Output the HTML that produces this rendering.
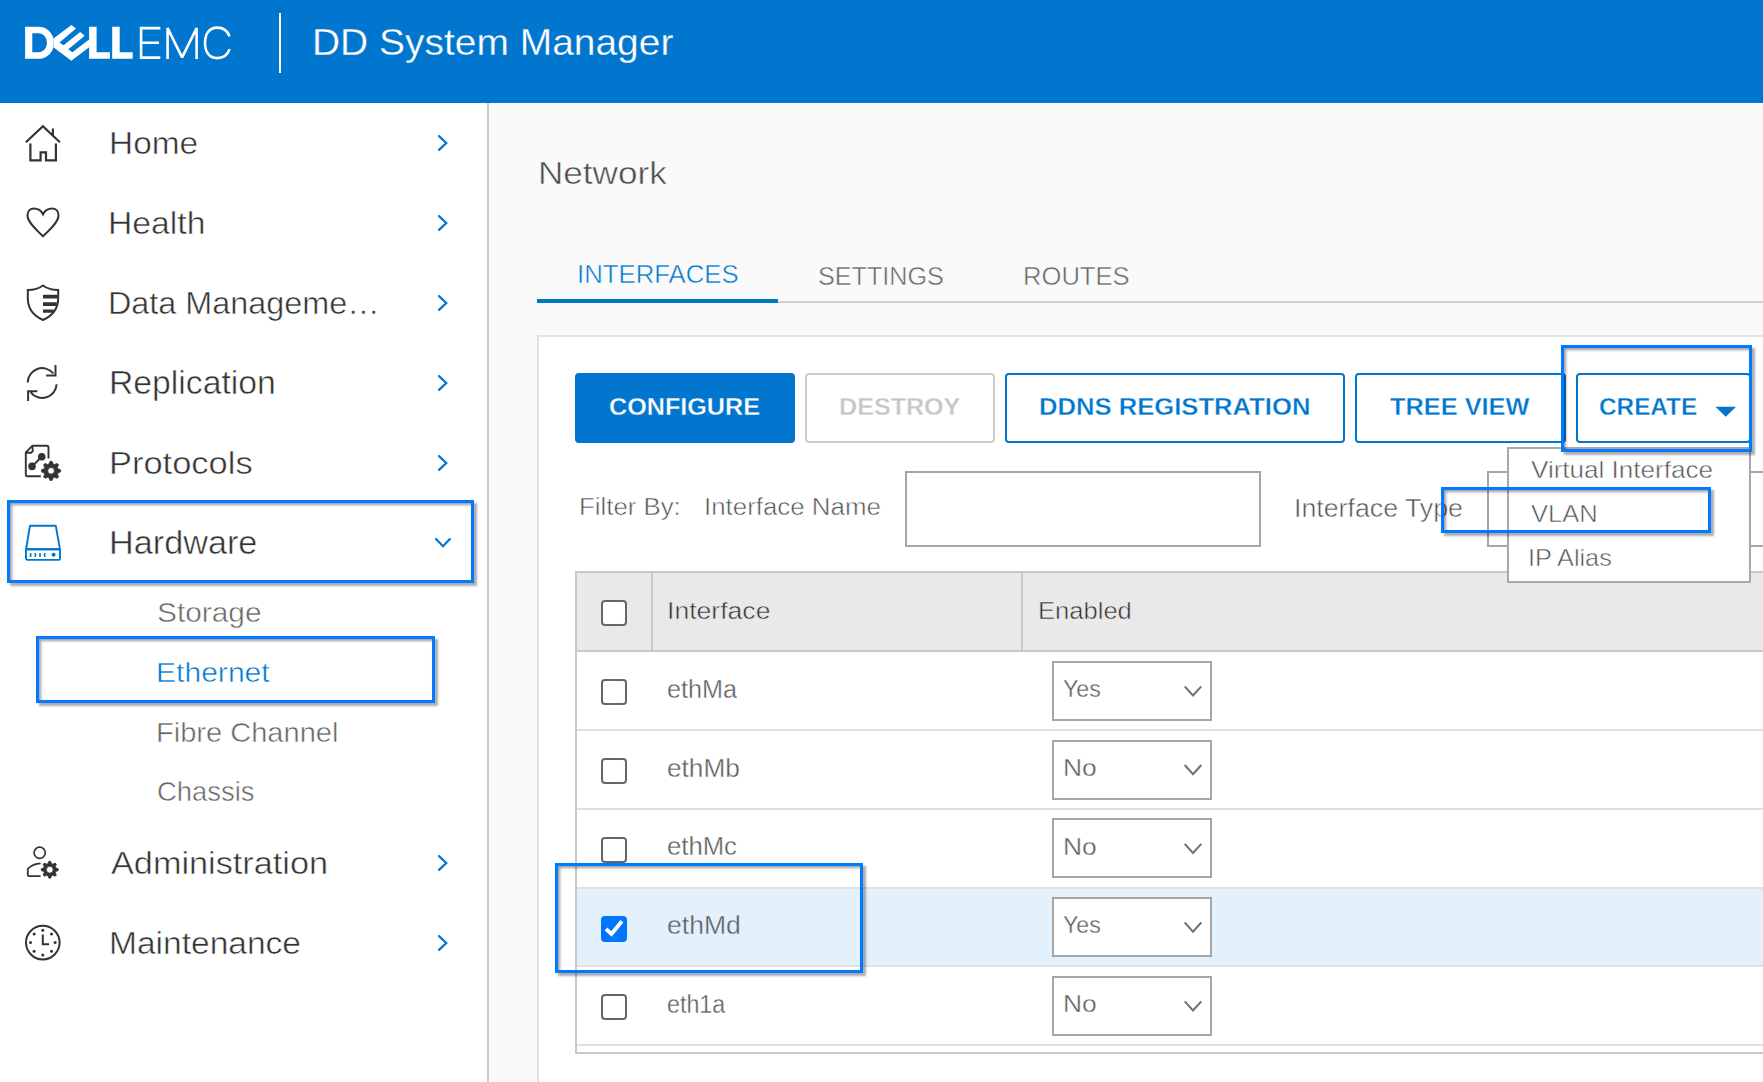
<!DOCTYPE html>
<html><head><meta charset="utf-8"><style>
html,body{margin:0;padding:0;width:1763px;height:1082px;overflow:hidden;background:#fafafa;font-family:"Liberation Sans",sans-serif;}
.abs{position:absolute;box-sizing:border-box;}
.t{position:absolute;white-space:nowrap;transform-origin:0 0;z-index:6;}
#header{left:0;top:0;width:1763px;height:103px;background:#0076ce;}
#sidebar{left:0;top:103px;width:487px;height:979px;background:#fff;border-right:2px solid #cbcbcb;box-sizing:content-box;}
#card{left:537px;top:335px;width:1300px;height:900px;background:#fff;border:2px solid #e3e3e3;}
.btn{position:absolute;box-sizing:border-box;top:373px;height:70px;border-radius:4px;border:2px solid #0076ce;background:#fff;}
.hl{position:absolute;box-sizing:border-box;border:3px solid #007bff;z-index:20;box-shadow:3px 3px 2px rgba(0,0,0,.32), inset 2px 2px 3px rgba(0,0,0,.38);}
.cb{position:absolute;box-sizing:border-box;left:601px;width:26px;height:26px;border:2px solid #666;border-radius:4px;background:#fff;}
.sel{position:absolute;box-sizing:border-box;left:1052px;width:160px;height:60px;border:2px solid #a6a6a6;background:#fff;}
.rowline{position:absolute;left:577px;width:1200px;height:2px;background:#e0e0e0;}
svg{position:absolute;overflow:visible;}

</style></head><body>
<div class="abs" id="header"></div>
<svg style="left:0;top:0;z-index:2" width="300" height="103" viewBox="0 0 300 103">
  <g fill="#fff">
    <path d="M25.1,26.8 H38.4 C46,26.8 51.5,31.5 53.4,38.4 V47.2 C51.5,54 46,58.8 38.4,58.8 H25.1 Z M32.3,33.3 V52.3 H38.4 C43.5,52.3 46.9,48 46.9,42.8 C46.9,37.6 43.5,33.3 38.4,33.3 Z" fill-rule="evenodd"/>
    <path d="M71.4,24.9 L76,28.5 L59.5,42.5 L63.6,45.2 L80.2,32.1 L84.7,35.8 L68.3,49.3 L72.4,52.3 L89.1,39.4 L89.1,47.2 L71.4,60.8 L53.4,47.2 L53.4,38.4 Z"/>
    <path d="M89.1,26.8 H96.6 V52.3 H109.9 V58.8 H89.1 Z"/>
    <path d="M112.2,26.8 H119.7 V52.3 H132.7 V58.8 H112.2 Z"/>
  </g>
  <g fill="none" stroke="#fff" stroke-width="2.6">
    <path d="M160.3,28.1 H141.1 V57.6 H160.3 M141.1,42.7 H159"/>
    <path d="M167.6,58.9 V28.1 L182.1,57.3 L196.6,28.1 V58.9" stroke-linejoin="miter" stroke-miterlimit="2"/>
    <path d="M229.6,36.4 C227.5,30.5 222.5,27.6 217,27.6 C209,27.6 205,34.5 205,43 C205,51.5 209,58.1 217,58.1 C222.5,58.1 227.5,55.5 229.6,49.2"/>
  </g>
  <rect x="279" y="13" width="2" height="60" fill="#fff"/>
</svg>
<div class="abs" id="sidebar"></div>
<!-- sidebar icons -->
<svg style="left:0;top:0;z-index:3" width="487" height="1082" viewBox="0 0 487 1082">
  <g fill="none" stroke="#333" stroke-width="2.2">
    <!-- home -->
    <path d="M25.9,142.2 L42.9,126.3 L59.9,142.2 M52.9,128.5 V136.5 M30.4,143.4 V160.4 H40.6 V152.4 H46 V160.4 H55.9 V143.4"/>
    <!-- heart -->
    <path stroke-width="2" d="M43,214.3 C41,210 37,208.5 33.5,208.5 C29.5,208.5 27.5,212 27.5,215.5 C27.5,221 33,227 43,236.3 C53,227 58.5,221 58.5,215.5 C58.5,212 56.5,208.5 52.5,208.5 C49,208.5 45,210 43,214.3 Z"/>
    <!-- shield -->
    <path stroke-width="2" d="M43,285.5 C39,288.5 33,290 27.8,290 V298 C27.8,309 34,316 43,320 C52,316 58.2,309 58.2,298 V290 C53,290 47,288.5 43,285.5 Z"/>
    <!-- replication -->
    <path stroke-width="2" d="M27.7,382.5 A14.5,14.5 0 0 1 53.3,373.3 M55.5,365 V375.4 H46.2 M56.6,384.2 A14.5,14.5 0 0 1 30.7,392.4 M28.1,401 V391.2 H37.4"/>
    <!-- protocols doc -->
    <path stroke-width="1.9" stroke-linejoin="round" d="M48.5,458.5 V447.5 Q48.5,445.8 46.8,445.8 H32.3 L25.8,452.3 V475 Q25.8,476.3 27.2,476.3 H40.8 M25.8,452.7 H31.3 L32.8,451.2 L32.3,445.8"/>
    <path stroke-width="2" d="M41.74,456.7 L32.03,466.4"/>
    <!-- admin -->
    <circle cx="39.66" cy="852.8" r="5.6" stroke-width="1.7"/>
    <path stroke-width="1.8" d="M40.6,863.3 C35,863.5 31,865.5 27.8,868.9 V875 Q27.8,876.2 29,876.2 H40.6"/>
    <!-- clock -->
    <circle cx="42.8" cy="942.6" r="16.8" stroke-width="2"/>
    <path stroke-width="2" d="M42.8,934.5 V944.3 H49"/>
  </g>
  <g fill="#333">
    <path d="M43,294.8 H57.8 V298.5 H43 Z M43,302.2 H56.8 V306 H43 Z M43,309.5 H54 L52.5,312.8 H43 Z"/>
    <circle cx="41.74" cy="456.7" r="3.8"/>
    <circle cx="32.03" cy="466.4" r="3.8"/>
    <path fill-rule="evenodd" stroke="#333" stroke-width="0.8" stroke-linejoin="round" d="M48.95,463.97 L50.06,461.31 L52.06,461.31 L53.17,463.97 L54.44,464.50 L57.10,463.40 L58.52,464.82 L57.42,467.48 L57.95,468.75 L60.61,469.86 L60.61,471.86 L57.95,472.97 L57.42,474.24 L58.52,476.90 L57.10,478.32 L54.44,477.22 L53.17,477.75 L52.06,480.41 L50.06,480.41 L48.95,477.75 L47.68,477.22 L45.02,478.32 L43.60,476.90 L44.70,474.24 L44.17,472.97 L41.51,471.86 L41.51,469.86 L44.17,468.75 L44.70,467.48 L43.60,464.82 L45.02,463.40 L47.68,464.50 Z M54.36,470.86 A3.3,3.3 0 1 0 47.76,470.86 A3.3,3.3 0 1 0 54.36,470.86 Z"/>
    <path fill-rule="evenodd" stroke="#333" stroke-width="0.8" stroke-linejoin="round" d="M47.92,863.68 L48.87,861.25 L50.65,861.25 L51.60,863.68 L52.72,864.14 L55.11,863.09 L56.37,864.35 L55.32,866.74 L55.78,867.86 L58.21,868.81 L58.21,870.59 L55.78,871.54 L55.32,872.66 L56.37,875.05 L55.11,876.31 L52.72,875.26 L51.60,875.72 L50.65,878.15 L48.87,878.15 L47.92,875.72 L46.80,875.26 L44.41,876.31 L43.15,875.05 L44.20,872.66 L43.74,871.54 L41.31,870.59 L41.31,868.81 L43.74,867.86 L44.20,866.74 L43.15,864.35 L44.41,863.09 L46.80,864.14 Z M53.16,869.70 A3.4,3.4 0 1 0 46.36,869.70 A3.4,3.4 0 1 0 53.16,869.70 Z"/>
    <g transform="translate(42.8,942.6)">
      <circle cx="0" cy="-12.3" r="1.5"/><circle cx="0" cy="12.3" r="1.5"/>
      <circle cx="-12.3" cy="0" r="1.5"/><circle cx="12.3" cy="0" r="1.5"/>
      <circle cx="8.7" cy="-8.7" r="1.5"/><circle cx="-8.7" cy="-8.7" r="1.5"/>
      <circle cx="8.7" cy="8.7" r="1.5"/><circle cx="-8.7" cy="8.7" r="1.5"/>
    </g>
  </g>
  <!-- hardware icon -->
  <g fill="none" stroke="#0076ce" stroke-width="1.9" stroke-linejoin="round">
    <path d="M30,525.8 H55.8 L60,549.3 H26 Z"/>
    <rect x="26" y="549.3" width="34" height="10.6" rx="1.5"/>
  </g>
  <g fill="#0076ce">
    <rect x="29.8" y="553" width="1.6" height="4"/><rect x="34.5" y="553" width="1.6" height="4"/>
    <rect x="39.2" y="553" width="1.6" height="4"/><rect x="43.9" y="553" width="1.6" height="4"/>
    <circle cx="53.6" cy="554.7" r="2"/>
  </g>
  <!-- chevrons -->
  <g fill="none" stroke="#0076ce" stroke-width="2.2" stroke-linecap="round" stroke-linejoin="miter">
    <path d="M439,136.1 L446.3,143 L439,149.9"/>
    <path d="M439,216.1 L446.3,223 L439,229.9"/>
    <path d="M439,296.1 L446.3,303 L439,309.9"/>
    <path d="M439,376.1 L446.3,383 L439,389.9"/>
    <path d="M439,456.1 L446.3,463 L439,469.9"/>
    <path d="M436,539.1 L443,546.2 L449.9,539.1"/>
    <path d="M439,856.1 L446.3,863 L439,869.9"/>
    <path d="M439,936.1 L446.3,943 L439,949.9"/>
  </g>
</svg>
<!-- main -->
<div class="abs" id="card"></div>
<div class="abs" style="left:537px;top:299px;width:241px;height:4px;background:#007abf;z-index:2"></div>
<div class="abs" style="left:778px;top:301px;width:985px;height:2px;background:#cfcfcf;"></div>
<!-- buttons -->
<div class="btn" style="left:575px;width:220px;background:#0076ce;border-color:#0076ce"></div>
<div class="btn" style="left:805px;width:190px;border-color:#cccccc"></div>
<div class="btn" style="left:1005px;width:340px"></div>
<div class="btn" style="left:1355px;width:211px"></div>
<div class="btn" style="left:1576px;width:175px"></div>
<svg style="left:0;top:0;z-index:7" width="1763" height="1082"><path d="M1715.5,406.7 H1736 L1725.75,416.8 Z" fill="#0076ce"/></svg>
<!-- filter -->
<div class="abs" style="left:905px;top:471px;width:356px;height:76px;border:2px solid #a6a6a6;background:#fff"></div>
<div class="abs" style="left:1487px;top:471px;width:400px;height:76px;border:2px solid #a6a6a6;background:#fff"></div>
<!-- dropdown -->
<div class="abs" style="left:1507px;top:447px;width:244px;height:136px;border:2px solid #a8a8a8;background:#fff;z-index:5"></div>
<!-- table -->
<div class="abs" style="left:575px;top:571px;width:1300px;height:483px;border-left:2px solid #c8c8c8;border-top:2px solid #c8c8c8;border-bottom:2px solid #c8c8c8;background:#fff"></div>
<div class="abs" style="left:577px;top:573px;width:1200px;height:77px;background:#e9e9e9"></div>
<div class="abs" style="left:577px;top:650px;width:1200px;height:2px;background:#c8c8c8"></div>
<div class="abs" style="left:651px;top:573px;width:2px;height:77px;background:#cacaca"></div>
<div class="abs" style="left:1021px;top:573px;width:2px;height:77px;background:#cacaca"></div>
<div class="abs" style="left:577px;top:889px;width:1200px;height:76px;background:#e3f1fd"></div>
<div class="rowline" style="top:729px"></div>
<div class="rowline" style="top:808px"></div>
<div class="rowline" style="top:887px"></div>
<div class="rowline" style="top:965px"></div>
<div class="rowline" style="top:1044px"></div>
<!-- checkboxes -->
<div class="cb" style="top:600px"></div>
<div class="cb" style="top:679px"></div>
<div class="cb" style="top:758px"></div>
<div class="cb" style="top:837px"></div>
<div class="cb" style="top:916px;background:#0076ff;border-color:#0076ff"></div>
<div class="cb" style="top:994px"></div>
<svg style="left:0;top:0;z-index:7" width="1763" height="1082"><path d="M606,929 L611.5,934 L621.9,921.2" fill="none" stroke="#fff" stroke-width="3.8"/></svg>
<!-- selects -->
<div class="sel" style="top:661px"></div>
<div class="sel" style="top:740px"></div>
<div class="sel" style="top:818px"></div>
<div class="sel" style="top:897px"></div>
<div class="sel" style="top:976px"></div>
<svg style="left:0;top:0;z-index:7" width="1763" height="1082">
 <g fill="none" stroke="#727272" stroke-width="2">
  <path d="M1184.7,686.3 L1193,695.5 L1201.3,686.3"/>
  <path d="M1184.7,765 L1193,774.2 L1201.3,765"/>
  <path d="M1184.7,843.8 L1193,853 L1201.3,843.8"/>
  <path d="M1184.7,922.5 L1193,931.7 L1201.3,922.5"/>
  <path d="M1184.7,1001.3 L1193,1010.5 L1201.3,1001.3"/>
 </g>
</svg>
<!-- highlight boxes -->
<div class="hl" style="left:7px;top:500px;width:467px;height:83px"></div>
<div class="hl" style="left:36px;top:636px;width:399px;height:67px"></div>
<div class="hl" style="left:1561px;top:345px;width:191px;height:107px"></div>
<div class="hl" style="left:1441px;top:487px;width:270px;height:46px"></div>
<div class="hl" style="left:555px;top:863px;width:308px;height:110px"></div>

<div class="t" id="hdr" style="left:312.40px;top:24.80px;font-size:36.5px;line-height:36.5px;color:#ffffff;font-weight:400;transform:scaleX(1.0668);-webkit-text-stroke:0.3px #0076ce">DD System Manager</div>
<div class="t" id="home" style="left:108.91px;top:126.61px;font-size:32.0px;line-height:32.0px;color:#333333;font-weight:400;transform:scaleX(1.0441);-webkit-text-stroke:0.5px #ffffff">Home</div>
<div class="t" id="health" style="left:108.36px;top:207.93px;font-size:31.5px;line-height:31.5px;color:#333333;font-weight:400;transform:scaleX(1.0693);-webkit-text-stroke:0.5px #ffffff">Health</div>
<div class="t" id="dm" style="left:108.45px;top:287.63px;font-size:31.5px;line-height:31.5px;color:#333333;font-weight:400;transform:scaleX(1.0275);-webkit-text-stroke:0.5px #ffffff">Data Manageme…</div>
<div class="t" id="rep" style="left:108.62px;top:367.38px;font-size:32.5px;line-height:32.5px;color:#333333;font-weight:400;transform:scaleX(1.0376);-webkit-text-stroke:0.5px #ffffff">Replication</div>
<div class="t" id="prot" style="left:108.51px;top:447.83px;font-size:31.5px;line-height:31.5px;color:#333333;font-weight:400;transform:scaleX(1.0937);-webkit-text-stroke:0.5px #ffffff">Protocols</div>
<div class="t" id="hw" style="left:108.59px;top:527.08px;font-size:32.5px;line-height:32.5px;color:#333333;font-weight:400;transform:scaleX(1.0529);-webkit-text-stroke:0.5px #ffffff">Hardware</div>
<div class="t" id="adm" style="left:110.60px;top:847.93px;font-size:31.5px;line-height:31.5px;color:#333333;font-weight:400;transform:scaleX(1.0875);-webkit-text-stroke:0.5px #ffffff">Administration</div>
<div class="t" id="mnt" style="left:109.44px;top:928.05px;font-size:31.0px;line-height:31.0px;color:#333333;font-weight:400;transform:scaleX(1.0817);-webkit-text-stroke:0.5px #ffffff">Maintenance</div>
<div class="t" id="sto" style="left:157.13px;top:599.09px;font-size:28.0px;line-height:28.0px;color:#666666;font-weight:400;transform:scaleX(1.0653);-webkit-text-stroke:0.5px #ffffff">Storage</div>
<div class="t" id="eth" style="left:156.01px;top:659.02px;font-size:27.5px;line-height:27.5px;color:#0076ce;font-weight:400;transform:scaleX(1.0937);-webkit-text-stroke:0.5px #ffffff">Ethernet</div>
<div class="t" id="fc" style="left:156.09px;top:719.02px;font-size:27.5px;line-height:27.5px;color:#666666;font-weight:400;transform:scaleX(1.0559);-webkit-text-stroke:0.5px #ffffff">Fibre Channel</div>
<div class="t" id="cha" style="left:157.20px;top:778.42px;font-size:27.5px;line-height:27.5px;color:#666666;font-weight:400;transform:scaleX(0.9963);-webkit-text-stroke:0.5px #ffffff">Chassis</div>
<div class="t" id="net" style="left:537.61px;top:156.61px;font-size:32.0px;line-height:32.0px;color:#4d4d4d;font-weight:400;transform:scaleX(1.0966);-webkit-text-stroke:0.5px #fafafa">Network</div>
<div class="t" id="tab1" style="left:576.56px;top:261.36px;font-size:26.5px;line-height:26.5px;color:#0076ce;font-weight:400;transform:scaleX(0.9718);-webkit-text-stroke:0.5px #fafafa">INTERFACES</div>
<div class="t" id="tab2" style="left:818.33px;top:263.29px;font-size:26.0px;line-height:26.0px;color:#666666;font-weight:400;transform:scaleX(0.9684);-webkit-text-stroke:0.5px #fafafa">SETTINGS</div>
<div class="t" id="tab3" style="left:1023.33px;top:263.29px;font-size:26.0px;line-height:26.0px;color:#666666;font-weight:400;transform:scaleX(0.9840);-webkit-text-stroke:0.5px #fafafa">ROUTES</div>
<div class="t" id="b1" style="left:608.67px;top:394.76px;font-size:24.5px;line-height:24.5px;color:#ffffff;font-weight:700;transform:scaleX(1.0271);-webkit-text-stroke:0.35px #0076ce">CONFIGURE</div>
<div class="t" id="b2" style="left:838.98px;top:394.86px;font-size:24.5px;line-height:24.5px;color:#c6c6c6;font-weight:700;transform:scaleX(1.0248);-webkit-text-stroke:0.35px #ffffff">DESTROY</div>
<div class="t" id="b3" style="left:1039.03px;top:395.18px;font-size:24.0px;line-height:24.0px;color:#0076ce;font-weight:700;transform:scaleX(1.0675);-webkit-text-stroke:0.35px #ffffff">DDNS REGISTRATION</div>
<div class="t" id="b4" style="left:1389.70px;top:395.18px;font-size:24.0px;line-height:24.0px;color:#0076ce;font-weight:700;transform:scaleX(1.0562);-webkit-text-stroke:0.35px #ffffff">TREE VIEW</div>
<div class="t" id="b5" style="left:1598.60px;top:395.18px;font-size:24.0px;line-height:24.0px;color:#0076ce;font-weight:700;transform:scaleX(1.0136);-webkit-text-stroke:0.35px #ffffff">CREATE</div>
<div class="t" id="f1" style="left:579.10px;top:496.20px;font-size:23.5px;line-height:23.5px;color:#555555;font-weight:400;transform:scaleX(1.0979);-webkit-text-stroke:0.5px #ffffff">Filter By:</div>
<div class="t" id="f2" style="left:703.60px;top:496.20px;font-size:23.5px;line-height:23.5px;color:#555555;font-weight:400;transform:scaleX(1.1010);-webkit-text-stroke:0.5px #ffffff">Interface Name</div>
<div class="t" id="f3" style="left:1293.76px;top:495.63px;font-size:25.0px;line-height:25.0px;color:#555555;font-weight:400;transform:scaleX(1.0693);-webkit-text-stroke:0.5px #ffffff">Interface Type</div>
<div class="t" id="m1" style="left:1530.70px;top:458.08px;font-size:24.0px;line-height:24.0px;color:#555555;font-weight:400;transform:scaleX(1.0855);-webkit-text-stroke:0.5px #ffffff">Virtual Interface</div>
<div class="t" id="m2" style="left:1530.70px;top:502.73px;font-size:23.0px;line-height:23.0px;color:#555555;font-weight:400;transform:scaleX(1.1099);-webkit-text-stroke:0.5px #ffffff">VLAN</div>
<div class="t" id="m3" style="left:1527.79px;top:546.28px;font-size:24.0px;line-height:24.0px;color:#555555;font-weight:400;transform:scaleX(1.0525);-webkit-text-stroke:0.5px #ffffff">IP Alias</div>
<div class="t" id="th1" style="left:667.33px;top:598.76px;font-size:24.5px;line-height:24.5px;color:#333333;font-weight:400;transform:scaleX(1.0851);-webkit-text-stroke:0.5px #e9e9e9">Interface</div>
<div class="t" id="th2" style="left:1037.71px;top:598.96px;font-size:24.5px;line-height:24.5px;color:#333333;font-weight:400;transform:scaleX(1.0437);-webkit-text-stroke:0.5px #e9e9e9">Enabled</div>
<div class="t" id="r0" style="left:666.81px;top:677.01px;font-size:25.5px;line-height:25.5px;color:#5e5e5e;font-weight:400;transform:scaleX(0.9888);-webkit-text-stroke:0.35px #ffffff">ethMa</div>
<div class="t" id="v0" style="left:1063.40px;top:678.03px;font-size:23.0px;line-height:23.0px;color:#5e5e5e;font-weight:400;transform:scaleX(1.0102);-webkit-text-stroke:0.35px #ffffff">Yes</div>
<div class="t" id="r1" style="left:666.77px;top:755.76px;font-size:25.5px;line-height:25.5px;color:#5e5e5e;font-weight:400;transform:scaleX(1.0274);-webkit-text-stroke:0.35px #ffffff">ethMb</div>
<div class="t" id="v1" style="left:1062.65px;top:757.28px;font-size:23.0px;line-height:23.0px;color:#5e5e5e;font-weight:400;transform:scaleX(1.1481);-webkit-text-stroke:0.35px #ffffff">No</div>
<div class="t" id="r2" style="left:666.79px;top:834.11px;font-size:25.5px;line-height:25.5px;color:#5e5e5e;font-weight:400;transform:scaleX(1.0074);-webkit-text-stroke:0.35px #ffffff">ethMc</div>
<div class="t" id="v2" style="left:1062.65px;top:836.03px;font-size:23.0px;line-height:23.0px;color:#5e5e5e;font-weight:400;transform:scaleX(1.1481);-webkit-text-stroke:0.35px #ffffff">No</div>
<div class="t" id="r3" style="left:666.76px;top:913.26px;font-size:25.5px;line-height:25.5px;color:#5e5e5e;font-weight:400;transform:scaleX(1.0424);-webkit-text-stroke:0.35px #e3f1fd">ethMd</div>
<div class="t" id="v3" style="left:1063.40px;top:914.48px;font-size:23.0px;line-height:23.0px;color:#5e5e5e;font-weight:400;transform:scaleX(1.0102);-webkit-text-stroke:0.35px #ffffff">Yes</div>
<div class="t" id="r4" style="left:666.89px;top:992.01px;font-size:25.5px;line-height:25.5px;color:#5e5e5e;font-weight:400;transform:scaleX(0.9115);-webkit-text-stroke:0.35px #ffffff">eth1a</div>
<div class="t" id="v4" style="left:1062.65px;top:993.03px;font-size:23.0px;line-height:23.0px;color:#5e5e5e;font-weight:400;transform:scaleX(1.1481);-webkit-text-stroke:0.35px #ffffff">No</div>
</body></html>
